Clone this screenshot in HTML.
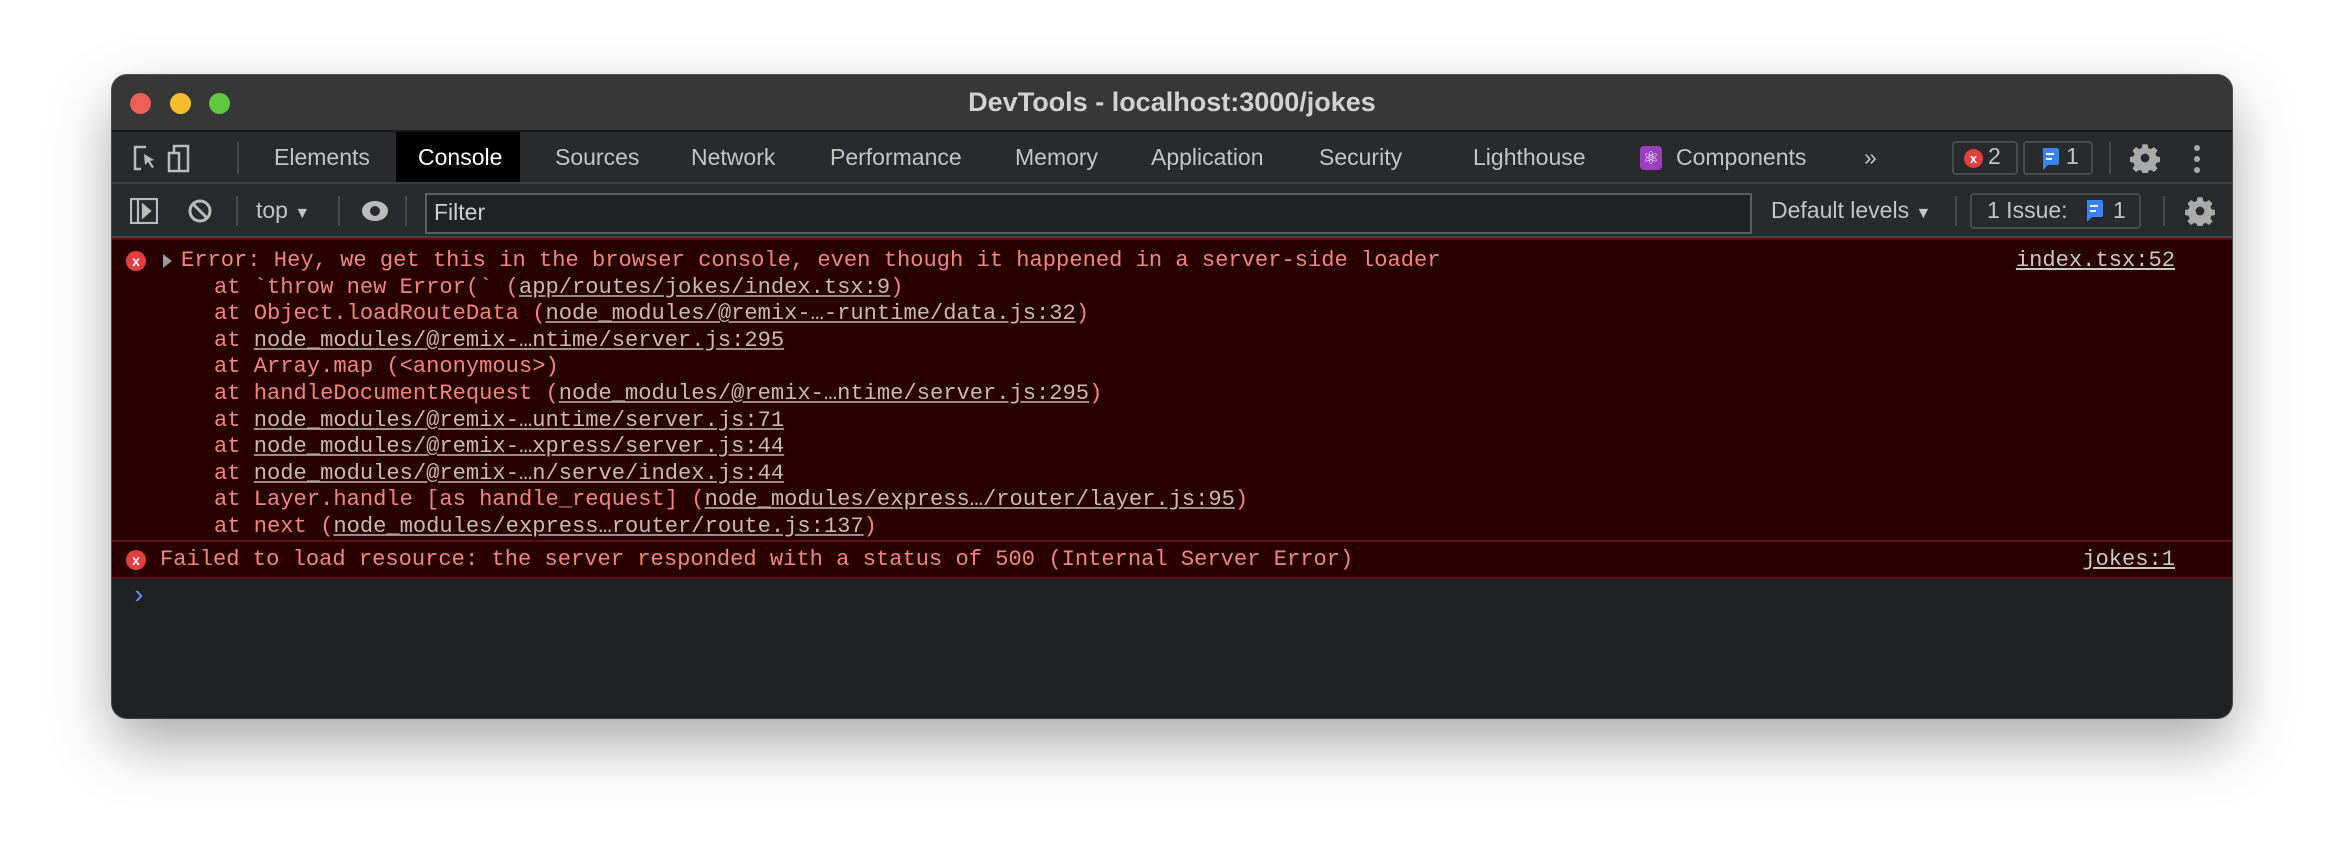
<!DOCTYPE html>
<html><head><meta charset="utf-8"><style>
*{margin:0;padding:0;box-sizing:border-box}
body{width:2344px;height:866px;background:#fff;position:relative;overflow:hidden;font-family:"Liberation Sans",sans-serif}
.win{position:absolute;left:112px;top:75px;width:2120px;height:643px;border-radius:15px;background:#202124;overflow:hidden;box-shadow:0 25px 60px rgba(0,0,0,.35),0 0 0 1px #555}
.title{position:absolute;left:0;top:0;width:100%;height:57px;background:#373737;border-bottom:2px solid #1a1a1a}
.dot{position:absolute;top:18px;width:21px;height:21px;border-radius:50%}
.ttxt{position:absolute;left:0;width:100%;top:12px;text-align:center;color:#d2d2d2;font-weight:bold;font-size:27px}
.tabs{position:absolute;left:0;top:57px;width:100%;height:52px;background:#292a2d;border-bottom:2px solid #3c3c3c}
.tab{position:absolute;top:12px;color:#c4c4c4;font-size:23px}
.tb{position:absolute;left:0;top:109px;width:100%;height:54px;background:#292a2d;border-bottom:2px solid #444}
.sep{position:absolute;width:2px;background:#4a4a4a}
.g{color:#c4c4c4;font-size:23px;position:absolute}
.err{position:absolute;left:0;top:163px;width:100%;height:304px;background:#290000;border-top:2px solid #5a1010;border-bottom:2px solid #5a1010}
.err2{position:absolute;left:0;top:467px;width:100%;height:37px;background:#290000;border-bottom:2px solid #5a1010}
.mono{font-family:"Liberation Mono",monospace;font-size:22.1px;color:#f0877f;white-space:pre;position:absolute;line-height:26.6px}
.mono u{color:#c9b8b8;text-decoration-color:#9a8a8a}
.x{position:absolute;width:20px;height:20px;border-radius:50%;background:#e04040;color:#fff;font-size:14px;font-weight:bold;text-align:center;line-height:20px}
.lnk{position:absolute;right:57px;font-family:"Liberation Mono",monospace;font-size:22.1px;color:#c8c8c8;text-decoration:underline}
</style></head><body>
<div class="win">
 <div class="title">
  <div class="dot" style="left:18px;background:#ee5f57"></div>
  <div class="dot" style="left:58px;background:#f6be2f"></div>
  <div class="dot" style="left:97px;background:#5fc840"></div>
  <div class="ttxt">DevTools - localhost:3000/jokes</div>
 </div>
 <div class="tabs">
  <svg style="position:absolute;left:20px;top:12px" width="60" height="30" viewBox="0 0 60 30" fill="none" stroke="#bbb" stroke-width="2.5"><path d="M14 3H3v22h6"/><path d="M12 10l10 6-4 1 4 6-2 1-4-6-3 3z" fill="#bbb" stroke="none"/><rect x="37" y="9" width="10" height="18"/><path d="M42 9V2h14v25h-9"/></svg>
  <div class="sep" style="left:125px;top:10px;height:32px"></div>
  <div class="tab" style="left:162px">Elements</div>
  <div style="position:absolute;left:284px;top:0;width:124px;height:50px;background:#000"></div>
  <div class="tab" style="left:306px;color:#fff">Console</div>
  <div class="tab" style="left:443px">Sources</div>
  <div class="tab" style="left:579px">Network</div>
  <div class="tab" style="left:718px">Performance</div>
  <div class="tab" style="left:903px">Memory</div>
  <div class="tab" style="left:1039px">Application</div>
  <div class="tab" style="left:1207px">Security</div>
  <div class="tab" style="left:1361px">Lighthouse</div>
  <div style="position:absolute;left:1528px;top:14px;width:22px;height:24px;border-radius:4px;background:#9b3fc0;color:#fff;font-size:18px;text-align:center;line-height:24px">⚛</div>
  <div class="tab" style="left:1564px">Components</div>
  <div class="tab" style="left:1752px">»</div>
  <div style="position:absolute;left:1840px;top:9px;width:66px;height:34px;border:2px solid #4a4a4a;border-radius:4px"></div>
  <div class="x" style="left:1852px;top:17px;width:19px;height:19px;font-size:13px;line-height:19px">x</div>
  <div class="tab" style="left:1876px;top:11px">2</div>
  <div style="position:absolute;left:1911px;top:9px;width:70px;height:34px;border:2px solid #4a4a4a;border-radius:4px"></div>
  <svg style="position:absolute;left:1928px;top:15px" width="20" height="24" viewBox="0 0 20 24"><path d="M3 1h14a2 2 0 0 1 2 2v13a2 2 0 0 1-2 2H8l-5 5V3a2 2 0 0 1 0-2z" fill="#3b82f6"/><path d="M6 7h8M6 12h6" stroke="#fff" stroke-width="2"/></svg>
  <div class="tab" style="left:1954px;top:11px">1</div>
  <div class="sep" style="left:1997px;top:10px;height:32px"></div>
  <svg style="position:absolute;left:2018px;top:11px" width="30" height="30" viewBox="0 0 24 24"><path fill="#aaa" d="M10 1h4l.6 3 2 .9 2.6-1.7 2.8 2.8-1.7 2.6.9 2 3 .6v4l-3 .6-.9 2 1.7 2.6-2.8 2.8-2.6-1.7-2 .9-.6 3h-4l-.6-3-2-.9-2.6 1.7-2.8-2.8 1.7-2.6-.9-2-3-.6v-4l3-.6.9-2-1.7-2.6 2.8-2.8 2.6 1.7 2-.9z"/><circle cx="12" cy="12" r="3.5" fill="#292a2d"/></svg>
  <svg style="position:absolute;left:2080px;top:12px" width="10" height="30" viewBox="0 0 10 30" fill="#aaa"><circle cx="5" cy="4" r="3"/><circle cx="5" cy="15" r="3"/><circle cx="5" cy="26" r="3"/></svg>
 </div>
 <div class="tb">
  <svg style="position:absolute;left:18px;top:14px" width="28" height="26" viewBox="0 0 28 26" fill="none" stroke="#bbb" stroke-width="2.2"><rect x="1" y="1" width="26" height="24"/><path d="M8 1v24"/><path d="M13 7l7 6-7 6z" fill="#bbb"/></svg>
  <svg style="position:absolute;left:75px;top:14px" width="26" height="26" viewBox="0 0 26 26" fill="none" stroke="#bbb" stroke-width="3"><circle cx="13" cy="13" r="10"/><path d="M6 6l14 14"/></svg>
  <div class="sep" style="left:124px;top:12px;height:30px"></div>
  <div class="g" style="left:144px;top:13px">top <span style="font-size:16px">▼</span></div>
  <div class="sep" style="left:226px;top:12px;height:30px"></div>
  <svg style="position:absolute;left:248px;top:15px" width="30" height="24" viewBox="0 0 30 24"><ellipse cx="15" cy="12" rx="13" ry="10" fill="#bbb"/><circle cx="15" cy="12" r="5" fill="#292a2d"/></svg>
  <div class="sep" style="left:293px;top:12px;height:30px"></div>
  <div style="position:absolute;left:313px;top:9px;width:1327px;height:41px;border:2px solid #5e5e5e;background:#202124"></div>
  <div class="g" style="left:322px;top:15px;color:#d0d0d0">Filter</div>
  <div class="g" style="left:1659px;top:13px">Default levels <span style="font-size:16px">▼</span></div>
  <div class="sep" style="left:1843px;top:12px;height:30px"></div>
  <div style="position:absolute;left:1858px;top:9px;width:171px;height:36px;border:2px solid #4a4a4a;border-radius:4px"></div>
  <div class="g" style="left:1875px;top:13px">1 Issue:</div>
  <svg style="position:absolute;left:1972px;top:15px" width="20" height="24" viewBox="0 0 20 24"><path d="M3 1h14a2 2 0 0 1 2 2v13a2 2 0 0 1-2 2H8l-5 5V3a2 2 0 0 1 0-2z" fill="#3b82f6"/><path d="M6 7h8M6 12h6" stroke="#fff" stroke-width="2"/></svg>
  <div class="g" style="left:2001px;top:13px">1</div>
  <div class="sep" style="left:2051px;top:12px;height:30px"></div>
  <svg style="position:absolute;left:2073px;top:12px" width="30" height="30" viewBox="0 0 24 24"><path fill="#aaa" d="M10 1h4l.6 3 2 .9 2.6-1.7 2.8 2.8-1.7 2.6.9 2 3 .6v4l-3 .6-.9 2 1.7 2.6-2.8 2.8-2.6-1.7-2 .9-.6 3h-4l-.6-3-2-.9-2.6 1.7-2.8-2.8 1.7-2.6-.9-2-3-.6v-4l3-.6.9-2-1.7-2.6 2.8-2.8 2.6 1.7 2-.9z"/><circle cx="12" cy="12" r="3.5" fill="#292a2d"/></svg>
 </div>
 <div class="err">
  <div class="x" style="left:14px;top:11px">x</div>
  <div style="position:absolute;left:51px;top:14px;width:0;height:0;border-left:9px solid #999;border-top:7px solid transparent;border-bottom:7px solid transparent"></div>
  <div class="mono" style="left:69px;top:8px">Error: Hey, we get this in the browser console, even though it happened in a server-side loader</div>
  <div class="mono" style="left:102px;top:34.6px">at `throw new Error(` (<u>app/routes/jokes/index.tsx:9</u>)
at Object.loadRouteData (<u>node_modules/@remix-…-runtime/data.js:32</u>)
at <u>node_modules/@remix-…ntime/server.js:295</u>
at Array.map (&lt;anonymous&gt;)
at handleDocumentRequest (<u>node_modules/@remix-…ntime/server.js:295</u>)
at <u>node_modules/@remix-…untime/server.js:71</u>
at <u>node_modules/@remix-…xpress/server.js:44</u>
at <u>node_modules/@remix-…n/serve/index.js:44</u>
at Layer.handle [as handle_request] (<u>node_modules/express…/router/layer.js:95</u>)
at next (<u>node_modules/express…router/route.js:137</u>)</div>
  <div class="lnk" style="top:8px">index.tsx:52</div>
 </div>
 <div class="err2">
  <div class="x" style="left:14px;top:8px">x</div>
  <div class="mono" style="left:48px;top:5px">Failed to load resource: the server responded with a status of 500 (Internal Server Error)</div>
  <div class="lnk" style="top:5px">jokes:1</div>
 </div>
 <div style="position:absolute;left:19px;top:506px;color:#5a9cf8;font-size:26px;font-family:'Liberation Mono',monospace">›</div>
</div>
</body></html>
